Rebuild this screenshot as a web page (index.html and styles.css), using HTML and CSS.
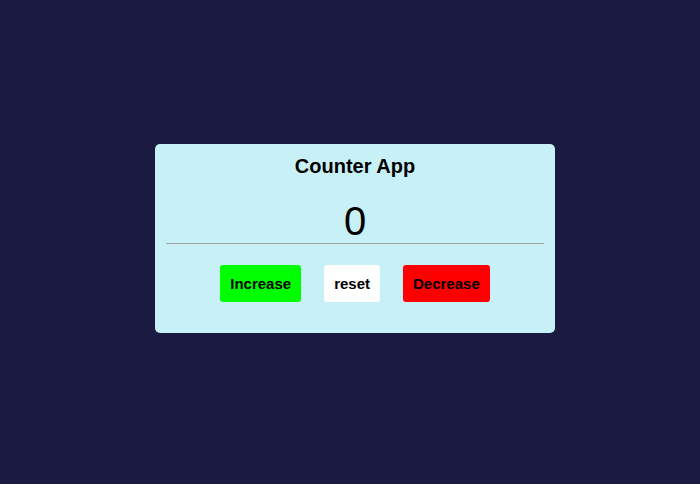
FILE: index.html
```html
<!DOCTYPE html>
<html>
<head>
<meta charset="utf-8">
<link rel="stylesheet" href="styles.css">
</head>
<body>
<div class="card">
  <h2 class="title">Counter App</h2>
  <div class="count">0</div>
  <hr class="rule">
  <div class="actions">
    <button class="btn btn-inc">Increase</button>
    <button class="btn btn-reset">reset</button>
    <button class="btn btn-dec">Decrease</button>
  </div>
</div>
</body>
</html>
```
FILE: styles.css
```css
html, body {
  margin: 0;
  height: 100%;
}
body {
  box-sizing: border-box;
  background: #1b1a40;
  font-family: "Liberation Sans", Arial, sans-serif;
  display: flex;
  align-items: center;
  justify-content: center;
  padding: 0 0 7px 10px;
}
.card {
  width: 400px;
  height: 189px;
  box-sizing: border-box;
  background: #c8f0f7;
  border-radius: 5px;
  padding: 11px 11px;
  display: flex;
  flex-direction: column;
  align-items: stretch;
}
.title {
  margin: 0;
  font-size: 20px;
  line-height: 23px;
  text-align: center;
  color: #000;
}
.count {
  margin-top: 21px;
  font-size: 40px;
  line-height: 44px;
  text-align: center;
  color: #000;
}
.rule {
  margin: 0;
  border: 0;
  border-top: 1px solid #a0a0a0;
  height: 0;
}
.actions {
  margin-top: 21px;
  display: flex;
  justify-content: center;
  gap: 23px;
}
.btn {
  font-family: "Liberation Sans", Arial, sans-serif;
  font-weight: bold;
  font-size: 15px;
  line-height: 17px;
  height: 37px;
  padding: 0 10px;
  border: 0;
  border-radius: 3px;
  color: #000;
}
.btn-inc { background: #00ff00; }
.btn-reset { background: #ffffff; }
.btn-dec { background: #ff0000; }
```
